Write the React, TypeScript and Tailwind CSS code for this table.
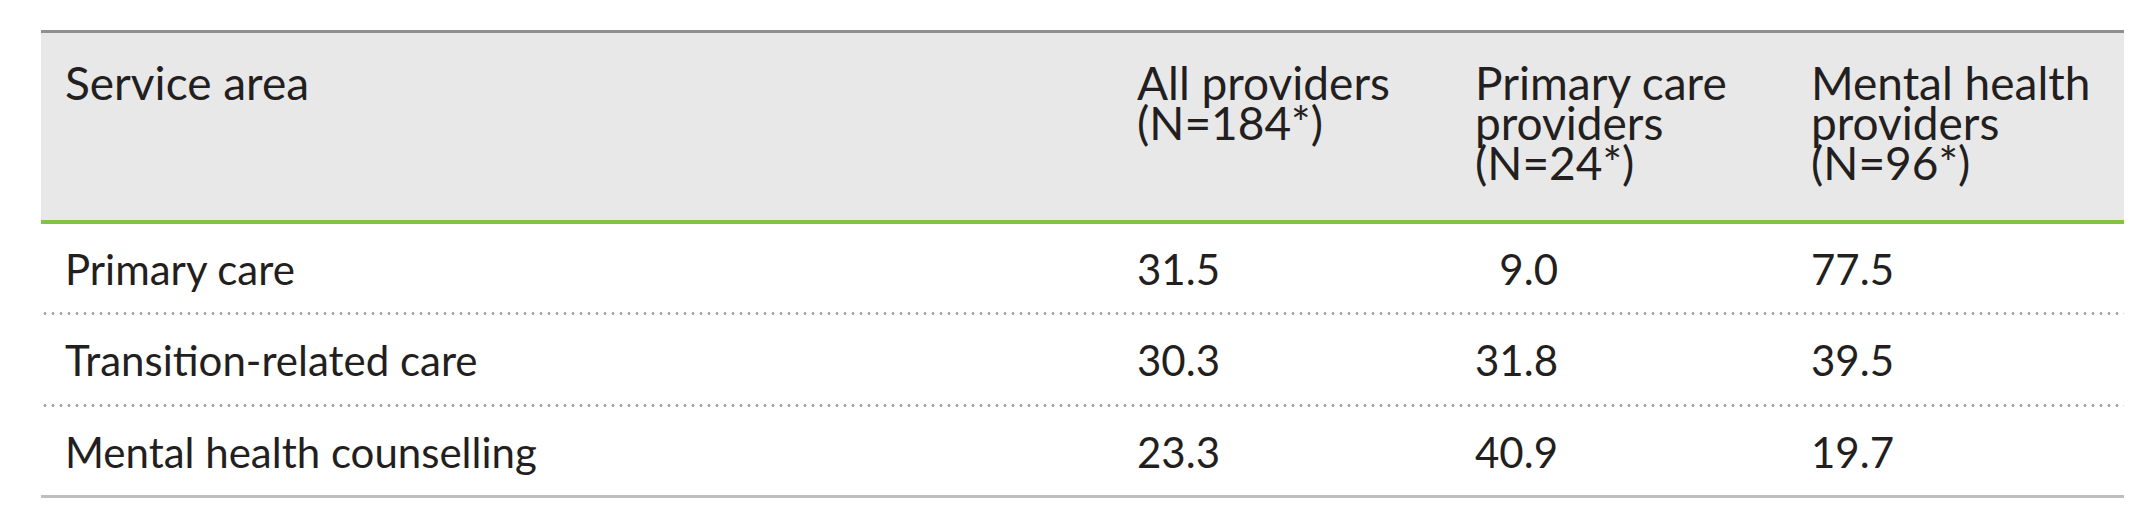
const columns = [
  ["All providers", "(N=184*)"],
  ["Primary care", "providers", "(N=24*)"],
  ["Mental health", "providers", "(N=96*)"],
];

const rows = [
  { area: "Primary care", values: ["31.5", "9.0", "77.5"] },
  { area: "Transition-related care", values: ["30.3", "31.8", "39.5"] },
  { area: "Mental health counselling", values: ["23.3", "40.9", "19.7"] },
];

const grid = "grid grid-cols-[1072px_338px_336px_337px]";

const DottedRule = () => (
  <div className="h-[3px] w-full bg-[radial-gradient(circle,#a8a8a8_1.3px,transparent_1.7px)] bg-[length:8px_3px] bg-repeat-x" />
);

export default function App() {
  return (
    <div className="min-h-[510px] bg-white font-['Lato',sans-serif] text-[#231f20]">
      <div className="ml-[41px] w-[2083px] pt-[30px]">
        {/* header */}
        <div className={`${grid} h-[194px] border-t-[3px] border-b-4 border-t-[#8f8f8f] border-b-[#82c341] bg-[#e8e8e8] pt-[30px] text-[46px] leading-[40px]`}>
          <div className="pl-[24px]">Service area</div>
          {columns.map((lines, i) => (
            <div key={i} className="pl-[24px]">
              {lines.map((l) => (
                <span key={l} className="block">
                  {l}
                </span>
              ))}
            </div>
          ))}
        </div>

        {/* body */}
        {rows.map((row, i) => (
          <div key={row.area}>
            <div className={`${grid} ${i === 1 ? "h-[89px]" : "h-[88px]"} pt-[25px] text-[42px] leading-[40px]`}>
              <div className="pl-[24px]">{row.area}</div>
              {row.values.map((v, j) => (
                <div key={j} className="pl-[24px]">
                  <span className="inline-block w-[83px] text-right">{v}</span>
                </div>
              ))}
            </div>
            {i < rows.length - 1 ? <DottedRule /> : <div className="h-[3px] bg-[#bfbfbf]" />}
          </div>
        ))}
      </div>
    </div>
  );
}
